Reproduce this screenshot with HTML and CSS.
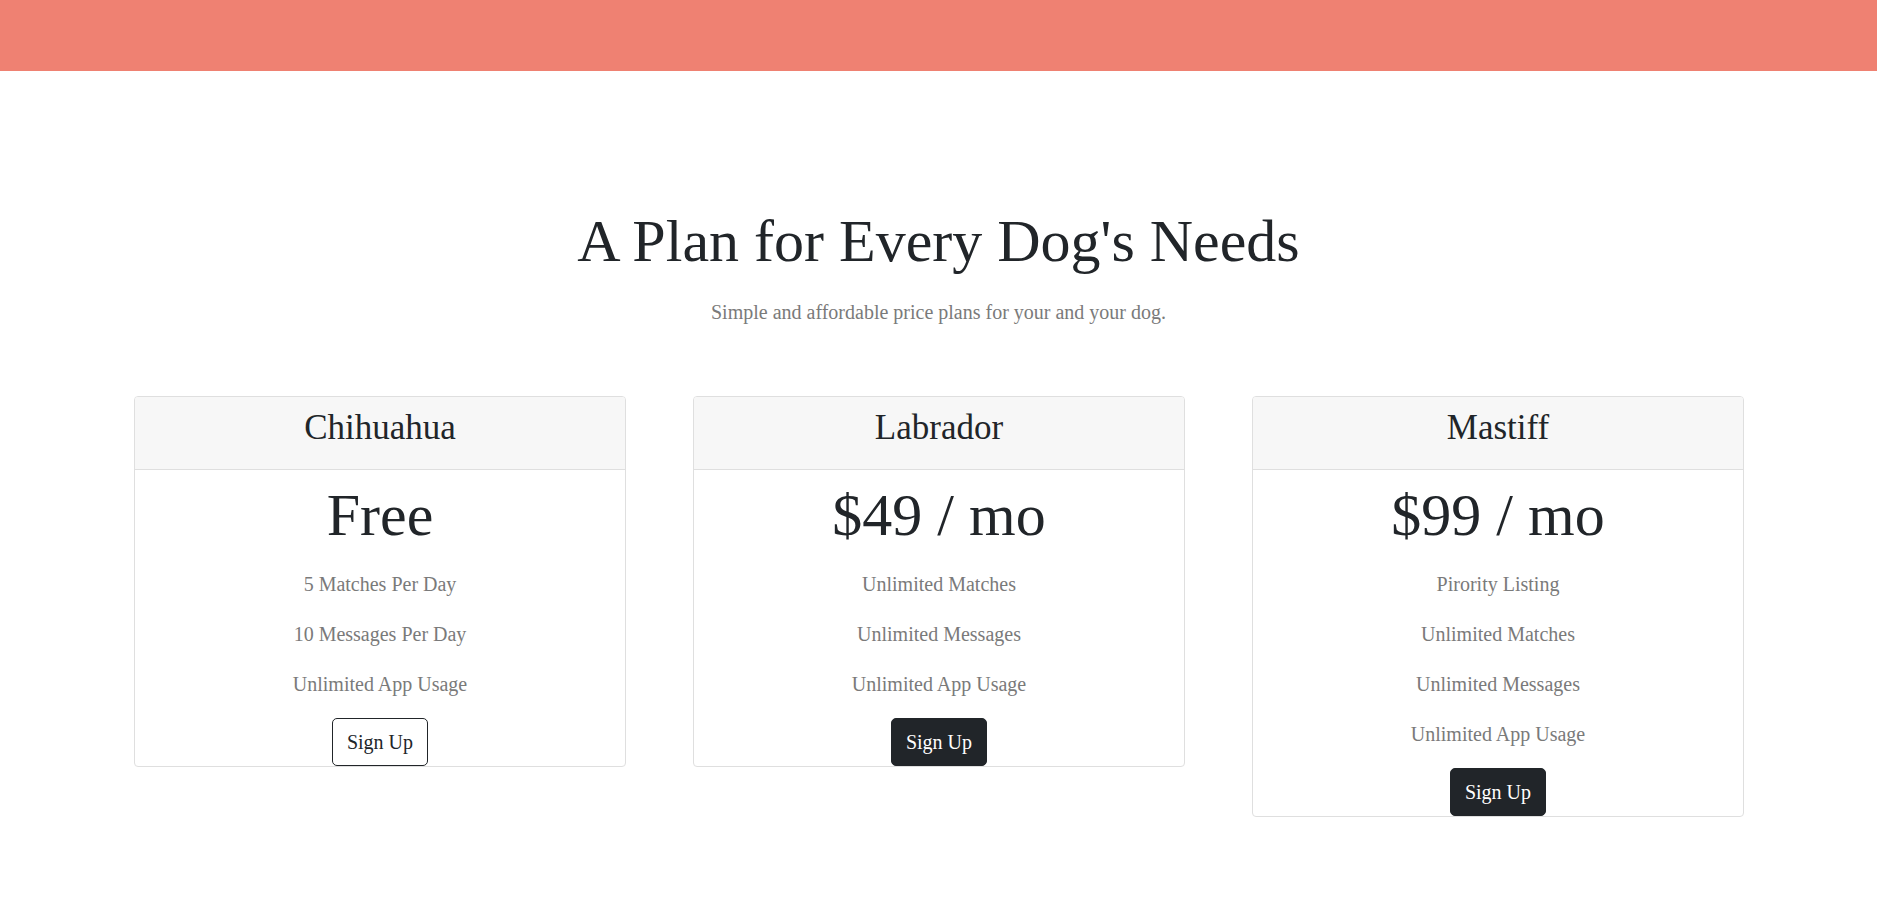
FILE: index.html
```html
<!DOCTYPE html>
<html lang="en">
<head>
<meta charset="utf-8">
<title>Pricing</title>
<link rel="stylesheet" href="styles.css">
</head>
<body>
<div class="topbar"></div>
<section class="pricing">
  <h1 class="title">A Plan for Every Dog's Needs</h1>
  <p class="subtitle">Simple and affordable price plans for your and your dog.</p>
  <div class="cards">
    <div class="card">
      <div class="card-header"><h3>Chihuahua</h3></div>
      <div class="card-body">
        <h2 class="price">Free</h2>
        <ul class="features">
          <li>5 Matches Per Day</li>
          <li>10 Messages Per Day</li>
          <li>Unlimited App Usage</li>
        </ul>
        <button class="btn btn-outline">Sign Up</button>
      </div>
    </div>
    <div class="card">
      <div class="card-header"><h3>Labrador</h3></div>
      <div class="card-body">
        <h2 class="price">$49 / mo</h2>
        <ul class="features">
          <li>Unlimited Matches</li>
          <li>Unlimited Messages</li>
          <li>Unlimited App Usage</li>
        </ul>
        <button class="btn btn-dark">Sign Up</button>
      </div>
    </div>
    <div class="card">
      <div class="card-header"><h3>Mastiff</h3></div>
      <div class="card-body">
        <h2 class="price">$99 / mo</h2>
        <ul class="features">
          <li>Pirority Listing</li>
          <li>Unlimited Matches</li>
          <li>Unlimited Messages</li>
          <li>Unlimited App Usage</li>
        </ul>
        <button class="btn btn-dark">Sign Up</button>
      </div>
    </div>
  </div>
</section>
</body>
</html>
```

FILE: styles.css
```css
* { box-sizing: border-box; }

html, body {
  margin: 0;
  padding: 0;
  background: #fff;
  font-family: "Liberation Serif", "Times New Roman", serif;
  color: #212529;
}

.topbar {
  height: 71px;
  background: #ef8172;
}

.pricing {
  padding-top: 134px;
  text-align: center;
}

.title {
  margin: 0 0 20px;
  font-size: 60px;
  font-weight: 400;
  line-height: 1.2;
  color: #212529;
}

.subtitle {
  margin: 0 0 69px;
  font-size: 20px;
  line-height: 1.5;
  color: #7a7a7a;
}

.cards {
  display: grid;
  grid-template-columns: repeat(3, 1fr);
  column-gap: 67px;
  padding: 0 133px 0 134px;
  align-items: start;
}

.card {
  border: 1px solid #dfdfdf;
  border-radius: 4px;
  background: #fff;
  overflow: hidden;
}

.card-header {
  background: #f7f7f7;
  border-bottom: 1px solid #dfdfdf;
  padding: 10px 16px 20px;
}

.card-header h3 {
  margin: 0;
  font-size: 35px;
  font-weight: 400;
  line-height: 1.2;
  color: #212529;
}

.card-body {
  padding: 9px 16px 0;
  display: flex;
  flex-direction: column;
  align-items: center;
}

.price {
  margin: 0 0 18px;
  font-size: 60px;
  font-weight: 400;
  line-height: 1.2;
  color: #212529;
}

.features {
  list-style: none;
  margin: 0 0 19px;
  padding: 0;
  display: flex;
  flex-direction: column;
  gap: 20px;
}

.features li {
  font-size: 20px;
  line-height: 1.5;
  color: #7a7a7a;
}

.btn {
  font-family: "Liberation Serif", "Times New Roman", serif;
  font-size: 20px;
  line-height: 1.5;
  padding: 8px 14px;
  border-radius: 5px;
  border: 1px solid #212529;
  cursor: pointer;
}

.btn-outline {
  background: #fff;
  color: #212529;
}

.btn-dark {
  background: #212529;
  color: #fff;
}
```
